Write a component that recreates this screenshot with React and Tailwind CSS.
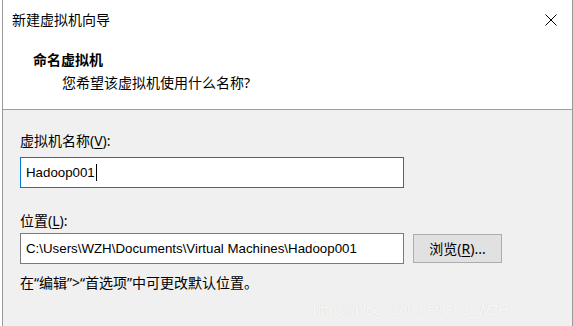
import React from 'react';

const font = { fontFamily: '"Segoe UI", "Noto Sans", "Noto Sans CJK SC", sans-serif' };
const latin = { fontFamily: '"Liberation Sans", Arial, "Noto Sans CJK SC", sans-serif' };

const App = () => (
    <div className="w-[573px] h-[326px] bg-white overflow-hidden" style={font}>
        <div className="ml-[2px] w-[571px] h-[326px] border-l border-r border-[#9a9a9a] flex flex-col text-[#000]">
            {/* header */}
            <div className="h-[110px] bg-white border-b border-[#a0a0a0] relative">
                <div className="pl-[9px] pt-[10px] text-[14px] leading-[20px]">新建虚拟机向导</div>
                <svg className="absolute left-[542px] top-[14px]" width="12" height="12" viewBox="0 0 12 12">
                    <path d="M0.5 0.5 L11.5 11.5 M11.5 0.5 L0.5 11.5" stroke="#000" strokeWidth="1" />
                </svg>
                <div className="pl-[30px] pt-[20px] text-[14px] font-bold leading-[20px]">命名虚拟机</div>
                <div className="pl-[59px] pt-[3px] text-[14px] leading-[20px]">您希望该虚拟机使用什么名称?</div>
            </div>

            {/* body */}
            <div className="flex-1 bg-[#f0f0f0] relative pl-[17px] pt-[21px]">
                <div className="text-[14px] leading-[20px]">
                    虚拟机名称(<span className="underline underline-offset-2">V</span>):
                </div>
                <div
                    className="mt-[6px] w-[384px] h-[31px] bg-white border border-[#0078d7] flex items-center pl-[5px] text-[13.3px]"
                    style={latin}
                >
                    Hadoop001<span className="inline-block w-px h-[17px] bg-black ml-[1px]"></span>
                </div>
                <div className="mt-[23px] text-[14px] leading-[20px]">
                    位置(<span className="underline underline-offset-2">L</span>):
                </div>
                <div className="mt-[2px] flex items-center gap-[9px]">
                    <div
                        className="w-[384px] h-[31px] bg-white border border-[#7a7a7a] flex items-center pl-[5px] text-[13.3px] whitespace-nowrap"
                        style={latin}
                    >
                        C:\Users\WZH\Documents\Virtual Machines\Hadoop001
                    </div>
                    <div className="w-[89px] h-[29px] bg-[#e1e1e1] border border-[#adadad] flex items-center justify-center text-[14px]">
                        浏览(<span className="underline underline-offset-2">R</span>)...
                    </div>
                </div>
                <div className="mt-[9px] text-[14px] leading-[20px]">在“编辑”&gt;“首选项”中可更改默认位置。</div>
                <div
                    className="absolute left-[310px] top-[190px] text-[14px] text-white/85 whitespace-nowrap"
                    style={{ fontFamily: '"Liberation Sans", Arial, sans-serif', textShadow: '0 0 1px #cfcfcf' }}
                >
                    https://blog.csdn.net/God_WZH
                </div>
            </div>
        </div>
    </div>
);

export default App;
